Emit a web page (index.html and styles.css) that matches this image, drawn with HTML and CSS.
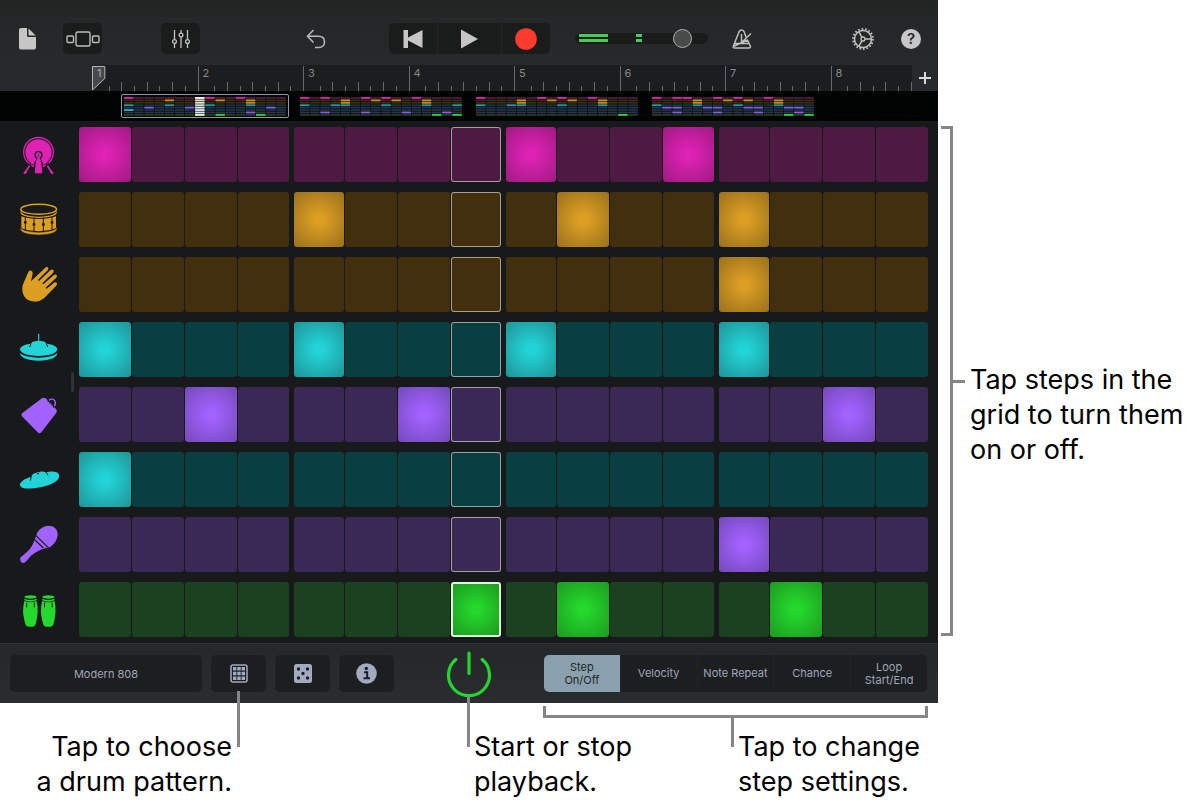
FILE: index.html
```html
<!DOCTYPE html>
<html lang="en">
<head>
<meta charset="utf-8">
<meta name="viewport" content="width=device-width, initial-scale=1">
<title>Beat Sequencer</title>
<link rel="stylesheet" href="styles.css">
</head>
<body>
<main class="figure">
  <section class="app" aria-label="Beat Sequencer">
    <header class="toolbar">
      <button class="tool" aria-label="My Songs">
        <svg width="18" height="22" viewBox="0 0 18 22"><path d="M2 0H8V7.500a1.500 1.500 0 0 0 1.500 1.500H17V19.500a2 2 0 0 1-2 2H2a2 2 0 0 1-2-2V2a2 2 0 0 1 2-2Z" fill="#c6c6c6"/><path d="M9.500 0.500L16.700 7.500H10.500a1 1 0 0 1-1-1Z" fill="#c6c6c6"/></svg>
      </button>
      <button class="tool tool-boxed" aria-label="Browser">
        <svg width="34" height="16" viewBox="0 0 34 16" fill="none" stroke="#bcbcbc" stroke-width="1.400"><rect x="1" y="5" width="6.500" height="6.500" rx="1"/><rect x="10" y="1" width="14" height="14" rx="1.500"/><rect x="26.500" y="5" width="6.500" height="6.500" rx="1"/></svg>
      </button>
      <button class="tool tool-boxed" aria-label="Track controls">
        <svg width="20" height="20" viewBox="0 0 20 20" fill="none" stroke="#c0c0c0" stroke-width="1.300"><path d="M3.500 1V10.500M3.500 14.500V19M10 1V4M10 8V19M16.500 1V10.500M16.500 14.500V19"/><circle cx="3.500" cy="12.500" r="1.900"/><circle cx="10" cy="6" r="1.900"/><circle cx="16.500" cy="12.500" r="1.900"/></svg>
      </button>
      <button class="tool" aria-label="Undo">
        <svg width="20" height="20" viewBox="0 0 20 20" fill="none" stroke="#bcbcbc" stroke-width="1.500"><path d="M7.500 1L1.500 7.300L7.500 13.500M1.500 7.300H12.500C16.500 7.300 18.500 9.800 18.500 13C18.500 16.300 16 18.500 12.800 18.500H9"/></svg>
      </button>
      <div class="transport">
        <button aria-label="Go to beginning"><svg width="20" height="18" viewBox="0 0 20 18"><path d="M0.500 0H5V7.500L19.500 0V18L5 10.500V18H0.500Z" fill="#c6c6c6"/></svg></button>
        <button aria-label="Play"><svg width="17" height="20" viewBox="0 0 17 20"><path d="M0 0.500L17 10L0 19.500Z" fill="#c6c6c6"/></svg></button>
        <button aria-label="Record"><svg width="22" height="22" viewBox="0 0 22 22"><circle cx="11" cy="11" r="10.800" fill="#ff3a2f"/></svg></button>
      </div>
      <input class="volume" type="range" min="0" max="100" value="86" aria-label="Volume">
      <button class="tool" aria-label="Metronome">
        <svg width="20" height="20" viewBox="0 0 20 20" fill="none" stroke="#c0c0c0" stroke-width="1.500" stroke-linejoin="round"><path d="M1.200 17.500L7.200 2.500Q8.200 1 9.500 1Q11 1 12 2.500L14 8M15.500 11L18.500 17.500Q18.500 19 17 19H2.500Q1 19 1.200 17.500ZM2.500 14.500H17M9.500 5V13M9.500 13.500L19 4.500"/></svg>
      </button>
      <button class="tool" aria-label="Settings">
        <svg width="22" height="22" viewBox="0 0 22 22" fill="none" stroke="#c0c0c0"><circle cx="11" cy="11" r="10" stroke-width="1.800" stroke-dasharray="1.700 1.790"/><circle cx="11" cy="11" r="8.500" stroke-width="1.500"/><circle cx="11" cy="11" r="2" stroke-width="1.300"/><path d="M13 11H19.500M10 9.300L6.800 3.700M10 12.700L6.800 18.300" stroke-width="1.500"/></svg>
      </button>
      <button class="tool" aria-label="Help"><span class="help">?</span></button>
    </header>

    <div class="ruler">
      <div class="ticks" id="ticks"></div>
      <svg class="playhead" width="14" height="26" viewBox="0 0 14 26" aria-hidden="true"><path d="M0.500 1.500H12.800V13.500L0.500 25Z" fill="#48494c" stroke="#b6b6b6" stroke-width="1"/></svg>
      <button class="add" aria-label="Add section"><svg width="12" height="12" viewBox="0 0 12 12"><path d="M6 0V12M0 6H12" stroke="#dadada" stroke-width="2"/></svg></button>
    </div>

    <nav class="patterns" id="patterns" aria-label="Pattern overview"></nav>

    <div class="sequencer">
      <div class="row pink"><button class="pad" aria-label="Kick">
        <svg viewBox="57 43 120 120"><circle cx="115.500" cy="95" r="44.500" fill="none" stroke="currentColor" stroke-width="4"/><circle cx="115.500" cy="95" r="39.500" fill="currentColor"/><path d="M90 130L75 155M141 130L156 155" stroke="#17191b" stroke-width="11"/><path d="M89 135L75 156M142 135L156 156" stroke="currentColor" stroke-width="5"/><path d="M74 157L78 153M157 157L153 153" stroke="currentColor" stroke-width="7" stroke-linecap="round"/><path d="M102 159V126L108 118V112H123V118L129 126V159Z" fill="#17191b"/><circle cx="115.500" cy="103" r="12" fill="#17191b"/><circle cx="115.500" cy="103" r="8" fill="currentColor"/><path d="M112 102H119V112L124 124L127 158H104L107 124L112 112Z" fill="currentColor"/><path d="M115.500 101V108" stroke="#17191b" stroke-width="2"/></svg></button></div>
      <div class="row amber"><button class="pad" aria-label="Snare">
        <svg viewBox="57 238 120 120"><ellipse cx="116" cy="266" rx="53.500" ry="15" fill="none" stroke="currentColor" stroke-width="4.500"/><path d="M61 267Q61 286 116 288Q171 286 171 267V272Q171 280 165 283Q150 291 116 292Q82 291 67 283Q61 280 61 272Z" fill="currentColor"/><path d="M64 287Q80 294 116 295Q152 294 168 287V322Q152 330 116 332Q80 330 64 322Z" fill="currentColor"/><path d="M76 288V330M102 290V334M130 290V334M156 288V330" stroke="#17191b" stroke-width="3"/><path d="M72 305H80M98 311H106M126 311H134M152 305H160" stroke="#17191b" stroke-width="7"/><path d="M61 317Q61 333 116 335Q171 333 171 317V325Q168 342 116 343Q63 342 61 325Z" fill="currentColor" stroke="#17191b" stroke-width="1.500"/></svg></button></div>
      <div class="row amber"><button class="pad" aria-label="Clap">
        <svg viewBox="57 433 120 120"><path d="M67 506Q66 495 72 484L84 456Q87 447 94 450Q99 452 98 459L93 482L135 442Q140 437 144 440Q147 444 143 449L114 478L117 481L151 449Q157 444 160 448Q163 452 159 457L127 488L130 491L161 464Q167 459 170 463Q173 468 168 472L137 501L140 504L162 486Q168 483 171 487Q172 491 168 496L132 533Q120 543 106 543Q88 543 77 533Q67 522 67 506Z" fill="currentColor"/></svg></button></div>
      <div class="row teal"><button class="pad" aria-label="Closed hi-hat">
        <svg viewBox="57 628 120 120"><path d="M60 685Q62 673 92 669Q97 662 108 661H124Q135 662 140 669Q170 673 172 685Q170 704 116 706Q62 704 60 685Z" fill="currentColor"/><path d="M116 639V664" stroke="currentColor" stroke-width="3.500"/><path d="M93 669L89 679M139 669L143 679" stroke="#17191b" stroke-width="3"/><path d="M60 697Q72 710 116 711Q160 710 172 697Q171 718 116 720Q61 718 60 697Z" fill="currentColor"/></svg></button></div>
      <div class="row purple"><button class="pad" aria-label="Cowbell">
        <svg viewBox="57 43 120 120"><path d="M126 53Q131 49 137 53L168 85Q173 90 169 96L124 155Q119 161 113 155L66 107Q62 101 67 97Z" fill="currentColor"/><path d="M143 62Q155 54 162 63Q168 72 160 80" fill="none" stroke="#17191b" stroke-width="5"/><path d="M147 59Q157 51 164 60Q169 69 163 76" fill="none" stroke="currentColor" stroke-width="4"/><path d="M147 68Q153 64 156 68Q159 72 155 76" fill="none" stroke="#17191b" stroke-width="2.500"/></svg></button></div>
      <div class="row teal"><button class="pad" aria-label="Open hi-hat">
        <svg viewBox="57 238 120 120"><path d="M61 316C56 305 73 295 93 288C98 278 110 274 121 273C128 272 132 274 138 275C155 271 174 272 177 283C182 298 155 313 121 320C92 325 66 326 61 316Z" fill="currentColor"/><path d="M94 286L91 300M137 273L144 284M108 275L114 281L117 276" stroke="#17191b" stroke-width="3" fill="none"/></svg></button></div>
      <div class="row purple"><button class="pad" aria-label="Maraca">
        <svg viewBox="57 433 120 120"><path d="M107 469Q111 451 126 441Q143 431 160 438Q174 446 173 464Q170 485 152 498L138 502Q121 507 109 514Q101 519 93 525L80 540Q72 550 64 545Q57 536 63 529L80 515Q89 507 96 495Q103 483 107 469Z" fill="currentColor"/><path d="M107 464L144 500M103 476L130 502" stroke="#17191b" stroke-width="3.500"/></svg></button></div>
      <div class="row green"><button class="pad" aria-label="Congas">
        <svg viewBox="57 628 120 120"><g id="conga"><ellipse cx="91.500" cy="649" rx="18" ry="5" fill="currentColor"/><path d="M73 654Q91 662 110 654V659Q91 667 73 659Z" fill="currentColor"/><path d="M73 661Q91 669 110 661Q114 676 113 694Q111 720 105 735Q91 742 78 735Q72 720 69 694Q69 676 73 661Z" fill="currentColor"/><path d="M80 666V680M103 666V680" stroke="#17191b" stroke-width="3"/></g><use href="#conga" x="53.500"/></svg></button></div>
      <span class="grip" aria-hidden="true"></span>
    </div>

    <footer class="controls">
      <button class="kit">Modern 808</button>
      <button class="kit" aria-label="Patterns"><svg width="18" height="19" viewBox="0 0 18 19"><rect x="1" y="1" width="16" height="17" rx="2" fill="none" stroke="#a3abc0" stroke-width="1.500"/><path d="M4.700 3V16M9 3V16M13.300 3V16" stroke="#a3abc0" stroke-width="3.400" stroke-dasharray="3.500 1.200"/></svg></button>
      <button class="kit" aria-label="Dice"><svg width="18" height="19" viewBox="0 0 18 19"><rect width="18" height="19" rx="2.500" fill="#a3abc0"/><g fill="#1c1e21"><circle cx="4.500" cy="5" r="1.700"/><circle cx="13.500" cy="5" r="1.700"/><circle cx="9" cy="9.500" r="1.700"/><circle cx="4.500" cy="14" r="1.700"/><circle cx="13.500" cy="14" r="1.700"/></g></svg></button>
      <button class="kit" aria-label="Info"><svg width="21" height="21" viewBox="0 0 21 21"><circle cx="10.500" cy="10.500" r="10.300" fill="#a3abc0"/><circle cx="10.300" cy="5.500" r="1.700" fill="#1c1e21"/><path d="M8 9.300H11.200V15M7.500 15.200H14" fill="none" stroke="#1c1e21" stroke-width="2"/></svg></button>
      <button class="power" aria-label="Power"><svg width="46" height="46" viewBox="0 0 46 46" fill="none" stroke="#24d62e" stroke-width="3.200" stroke-linecap="round"><path d="M8.800 8.500A20.500 20.500 0 1 0 35.200 8.500M22 2V22.500"/></svg></button>
      <div class="modes" role="group" aria-label="Step settings">
        <button class="active" aria-pressed="true">Step<br>On/Off</button>
        <button>Velocity</button>
        <button>Note Repeat</button>
        <button>Chance</button>
        <button>Loop<br>Start/End</button>
      </div>
    </footer>
  </section>

  <aside class="side-note">
    <span class="side-bracket"></span>
    <span class="side-stem"></span>
    <p>Tap steps in the<br>grid to turn them<br>on or off.</p>
  </aside>

  <div class="notes">
    <span class="modes-bracket"></span>
    <p class="note note-pattern">Tap to choose<br>a drum pattern.</p>
    <p class="note note-power">Start or stop<br>playback.</p>
    <p class="note note-modes">Tap to change<br>step settings.</p>
  </div>
</main>
<script src="app.js"></script>
</body>
</html>
```

FILE: styles.css
```css
* { box-sizing: border-box; }

body {
  margin: 0;
  background: #fff;
  color: #000;
  font-family: Inter, "Liberation Sans", sans-serif;
}

button {
  margin: 0;
  padding: 0;
  border: 0;
  background: none;
  color: inherit;
  font: inherit;
}

svg { display: block; }

p { margin: 0; }

.figure {
  display: grid;
  grid-template-columns: minmax(0, 1fr) 260px;
}

.app {
  background: #17191b;
  color: #9fa7bb;
}

/* Toolbar */
.toolbar {
  display: grid;
  grid-template-columns: 44fr 98fr 145fr 83fr 186fr 157fr 120fr 49fr 37fr;
  align-items: center;
  justify-items: start;
  height: 65px;
  padding: 12px 0 0 19px;
  background: linear-gradient(#232525, #272a2c);
}

.tool-boxed {
  display: grid;
  place-items: center;
  width: 39px;
  height: 31px;
  border-radius: 5px;
  background: #1a1c1c;
}

.transport {
  display: grid;
  grid-template-columns: 48px 63px 48px;
  gap: 1px;
  height: 31px;
  border-radius: 5px;
  background: #242727;
  overflow: hidden;
}

.transport button {
  display: grid;
  place-items: center;
  background: #1a1c1c;
}

.volume {
  appearance: none;
  width: 133px;
  height: 20px;
  margin: 0;
  background: none;
}

.volume::-webkit-slider-runnable-track {
  height: 11px;
  border-radius: 6px;
  background:
    linear-gradient(#47cb5e, #47cb5e) 4px 1px / 29px 3px no-repeat,
    linear-gradient(#47cb5e, #47cb5e) 4px 6px / 29px 3px no-repeat,
    linear-gradient(#47cb5e, #47cb5e) 61px 1px / 6px 3px no-repeat,
    linear-gradient(#47cb5e, #47cb5e) 61px 6px / 6px 3px no-repeat,
    #1a1c1c;
}

.volume::-webkit-slider-thumb {
  appearance: none;
  width: 19px;
  height: 19px;
  margin-top: -4px;
  border: 1px solid #b0b0b0;
  border-radius: 50%;
  background: #4a4b4b;
}

.help {
  display: grid;
  place-items: center;
  width: 20px;
  height: 20px;
  border-radius: 50%;
  background: #c6c6c6;
  color: #252829;
  font-size: 15px;
  font-weight: 600;
  line-height: 20px;
}

/* Ruler */
.ruler {
  position: relative;
  display: flex;
  height: 26px;
  padding-left: 92px;
  background: #27292c;
}

.ticks {
  display: flex;
  flex: 1;
  align-items: flex-end;
  background: #1b1d1e;
}

.ticks::after {
  content: "";
  width: 1px;
  height: 9px;
  background: #66686a;
}

.tick {
  flex: 1 1 0;
  width: 0;
  height: 5px;
  border-left: 1px solid #66686a;
}

.tick.beat { height: 9px; }

.tick.bar {
  height: 25px;
  padding: 1px 0 0 4px;
  color: #88898a;
  font-size: 11px;
  line-height: 12px;
}

.tick.first {
  z-index: 1;
  border-color: transparent;
  color: #a8a8a8;
}

.playhead {
  position: absolute;
  top: 0;
  left: 92px;
}

.add {
  display: grid;
  place-items: center;
  width: 26px;
}

/* Pattern overview */
.patterns {
  display: flex;
  gap: 8px;
  height: 31px;
  padding: 3px 0 0 121px;
  border-bottom: 1px solid #1c1b1d;
  background: #020303;
}

.pattern {
  display: grid;
  place-items: center;
  width: 168px;
  height: 24px;
  border: 1px solid transparent;
  border-radius: 2px;
}

.pattern.current { border-color: #8f98a6; }

/* Step grid */
.sequencer {
  position: relative;
  display: grid;
  gap: 10px;
  padding: 5px 10px 6px 0;
}

.row {
  display: grid;
  grid-template-columns: 79px minmax(0, 1fr);
  height: 55px;
}

.pad {
  display: grid;
  align-items: center;
  padding-left: 19px;
  color: var(--hue);
}

.pad svg {
  width: 40px;
  height: 40px;
}

.steps {
  display: grid;
  grid-template-columns: repeat(16, minmax(0, 1fr));
  gap: 1px;
}

.step {
  border-radius: 3px;
  background: var(--off);
}

.step:nth-child(4n + 1):not(:first-child) { margin-left: 2px; }

.step:nth-child(4n):not(:last-child) { margin-right: 2px; }

.step.on { background: radial-gradient(circle, var(--hue) 12%, var(--edge) 100%); }

.step.playing { border: 1px solid rgba(240, 235, 225, 0.6); }

.step.playing.on { border: 2px solid #dcfbdc; }

.pink { --hue: #de22b4; --edge: #a01a83; --off: #4e1a43; }
.amber { --hue: #dc9f24; --edge: #99701c; --off: #422f0d; }
.teal { --hue: #22d4d7; --edge: #1e9497; --off: #093f40; }
.purple { --hue: #a262ff; --edge: #7449b9; --off: #3a2955; }
.green { --hue: #24d82c; --edge: #1c9a20; --off: #1b411e; }

.grip {
  position: absolute;
  top: 250px;
  left: 71px;
  width: 3px;
  height: 20px;
  border-radius: 2px;
  background: #313235;
}

/* Bottom controls */
.controls {
  display: grid;
  grid-template-columns: 201fr 64fr 64fr 108fr 97fr 383fr;
  align-items: center;
  height: 60px;
  padding: 0 11px 0 10px;
  border-top: 1px solid #313335;
  background: linear-gradient(#25282a, #2a2d2f);
  font-size: 11px;
}

.kit {
  display: grid;
  place-items: center;
  height: 37px;
  margin-right: 9px;
  border-radius: 5px;
  background: #1c1e20;
}

.kit:nth-child(4) { margin-right: 53px; }

.modes {
  display: grid;
  grid-template-columns: repeat(5, minmax(0, 1fr));
  gap: 1px;
  height: 37px;
  border-radius: 5px;
  background: #222426;
  overflow: hidden;
}

.modes button {
  background: #1c1e20;
  line-height: 13px;
  white-space: nowrap;
}

.modes .active {
  background: #8ba0ae;
  color: #1e2427;
}

/* Callouts */
.side-note,
.notes {
  font-size: 27px;
  line-height: 35px;
  white-space: nowrap;
}

.side-note {
  display: flex;
  align-items: center;
  padding: 126px 0 67px 3px;
}

.side-bracket {
  align-self: stretch;
  width: 12px;
  border: 3px solid #868686;
  border-left: 0;
}

.side-stem {
  width: 12px;
  height: 3px;
  background: #868686;
}

.side-note p { padding: 66px 0 0 5px; }

.notes {
  display: grid;
  grid-template-columns: 240fr 227fr 76fr 188fr 197fr 10fr;
  padding-top: 3px;
}

.modes-bracket {
  grid-area: 1 / 4 / 2 / 6;
  height: 12px;
  border: 3px solid #868686;
  border-top: 0;
}

.note {
  position: relative;
  grid-row: 2;
  padding: 11px 7px 0;
}

.note::before {
  content: "";
  position: absolute;
  bottom: 41px;
  left: 0;
  width: 3px;
  background: #868686;
}

.note-pattern {
  grid-column: 1;
  padding-right: 8px;
  text-align: right;
}

.note-pattern::before {
  top: -27px;
  right: 0;
  left: auto;
}

.note-power { grid-column: 3 / 5; }

.note-power::before { top: -22px; }

.note-modes { grid-column: 5 / 7; }

.note-modes::before { top: -1px; }

.note::before { bottom: 52px; }
```

FILE: app.js
```js
const HUES = ["#d822ae", "#c98f20", "#c98f20", "#1c9da0", "#9457ee", "#1fb4b7", "#9457ee", "#24d82c"];
const DIM = ["#481a3e", "#3d2c0e", "#3d2c0e", "#0b3a3b", "#3a2a55", "#0b3a3b", "#3a2a55", "#1b411e"];
const SWEEP = ["#fff0fa", "#eadfc8", "#eadfc8", "#c9e6e6", "#f0eaff", "#c9e6e6", "#e6dcf6", "#d8ffd8"];
const PLAYING = 7;

// Active steps per instrument, top to bottom.
const PATTERNS = [
  [[0, 8, 11], [4, 9, 12], [12], [0, 4, 8, 12], [2, 6, 14], [0], [12], [7, 9, 13]],
  [[0, 2, 6, 8, 11], [4, 7, 9, 12], [4, 12], [0, 3, 4, 8, 12, 15], [], [], [2, 6, 10, 14], [13, 15]],
  [[0, 6, 8, 11], [4, 7, 9, 12], [4, 12], [0, 3, 4, 8, 12], [], [], [], [14]],
  [[0, 2, 3, 6, 8, 11], [4, 7, 9, 12], [4, 12], [0, 4, 8, 12], [1, 2, 5, 6, 9, 10, 13, 14], [], [2, 6, 10, 14], [13, 15]]
];

const ticks = document.getElementById("ticks");
for (let i = 0; i < 62; i++) {
  const tick = document.createElement("span");
  tick.className = "tick";
  if (i % 8 === 0) {
    tick.classList.add("bar");
    tick.textContent = i / 8 + 1;
  } else if (i % 2 === 0) {
    tick.classList.add("beat");
  }
  if (i === 0) tick.classList.add("first");
  ticks.append(tick);
}

document.querySelectorAll(".row").forEach((row, r) => {
  const name = row.querySelector(".pad").getAttribute("aria-label");
  const steps = document.createElement("div");
  steps.className = "steps";
  for (let c = 0; c < 16; c++) {
    const step = document.createElement("button");
    const on = PATTERNS[0][r].includes(c);
    step.className = "step" + (on ? " on" : "") + (c === PLAYING ? " playing" : "");
    step.setAttribute("aria-label", name + " step " + (c + 1));
    step.setAttribute("aria-pressed", on);
    step.addEventListener("click", () => {
      step.setAttribute("aria-pressed", step.classList.toggle("on"));
    });
    steps.append(step);
  }
  row.append(steps);
});

const nav = document.getElementById("patterns");
PATTERNS.forEach((rows, p) => {
  let shapes = "";
  rows.forEach((active, r) => {
    for (let c = 0; c < 16; c++) {
      const swept = p === 0 && c === PLAYING;
      const fill = swept ? SWEEP[r] : active.includes(c) ? HUES[r] : DIM[r];
      shapes += `<rect x="${c * 10.15}" y="${r * 2.42}" width="9.6" height="1.9" fill="${fill}"/>`;
    }
  });
  nav.insertAdjacentHTML("beforeend",
    `<button class="pattern${p === 0 ? " current" : ""}" aria-label="Section ${p + 1}"><svg width="162" height="19" viewBox="0 0 162 19">${shapes}</svg></button>`);
});
```
